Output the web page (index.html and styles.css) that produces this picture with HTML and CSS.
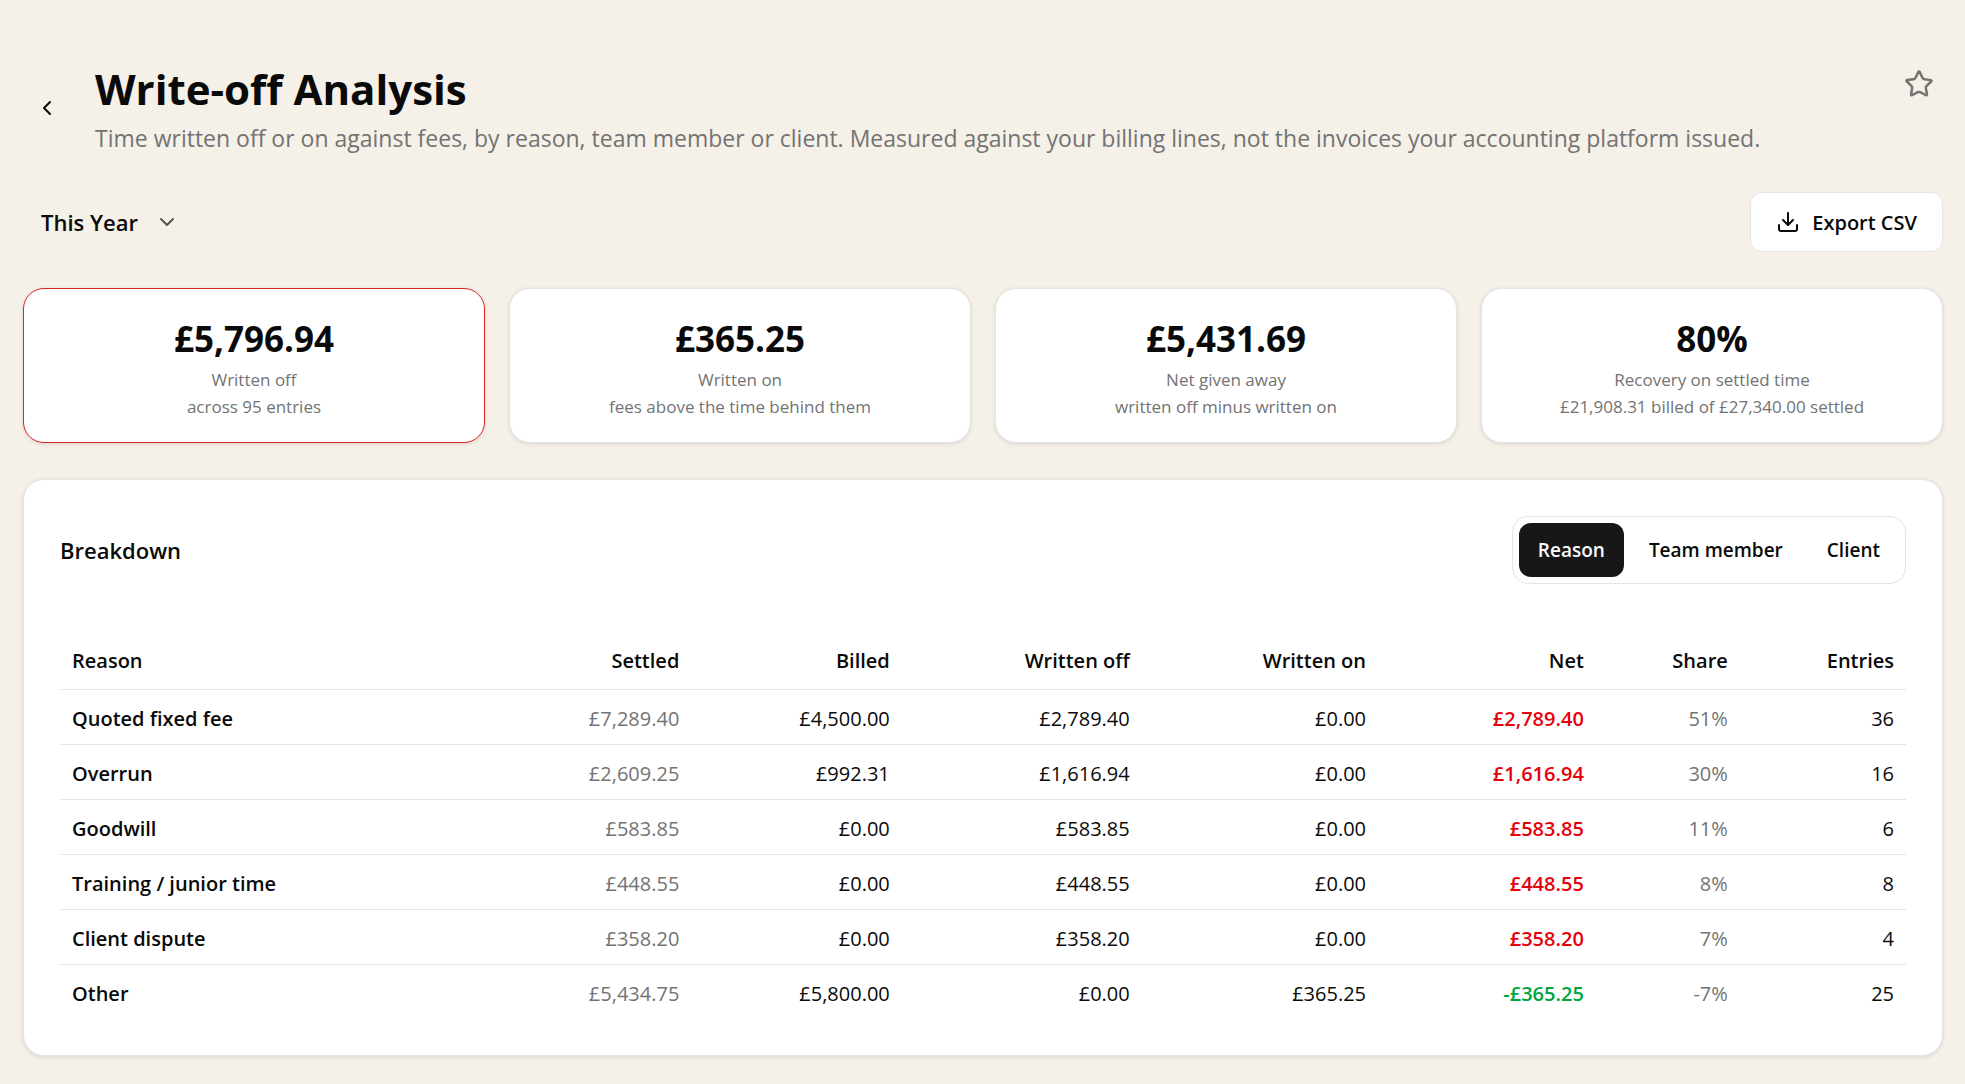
FILE: index.html
```
<!DOCTYPE html>
<html lang="en">
<head>
    <meta charset="UTF-8">
    <meta name="viewport" content="width=device-width, initial-scale=1.0">
    <title>Write-off Analysis</title>
    <link rel="stylesheet" href="styles.css">
</head>
<body>
    <main class="page">
        <header class="page-header">
            <button type="button" class="icon-button" aria-label="Back">
                <svg class="icon" viewBox="0 0 24 24"><path d="m15 18-6-6 6-6"/></svg>
            </button>
            <div class="page-heading">
                <h1>Write-off Analysis</h1>
                <p>Time written off or on against fees, by reason, team member or client. Measured against your billing lines, not the invoices your accounting platform issued.</p>
            </div>
            <button type="button" class="icon-button favourite" aria-label="Add to favourites">
                <svg class="icon icon-star" viewBox="0 0 24 24"><path d="M11.525 2.295a.53.53 0 0 1 .95 0l2.31 4.679a2.123 2.123 0 0 0 1.595 1.16l5.166.756a.53.53 0 0 1 .294.904l-3.736 3.638a2.123 2.123 0 0 0-.611 1.878l.882 5.14a.53.53 0 0 1-.771.56l-4.618-2.428a2.122 2.122 0 0 0-1.973 0L6.396 21.01a.53.53 0 0 1-.77-.56l.881-5.139a2.122 2.122 0 0 0-.611-1.879L2.16 9.795a.53.53 0 0 1 .294-.906l5.165-.755a2.122 2.122 0 0 0 1.597-1.16z"/></svg>
            </button>
        </header>

        <div class="toolbar">
            <div class="period">
                <select id="period" name="period" aria-label="Period">
                    <option>This Year</option>
                    <option>Last Year</option>
                </select>
                <svg class="icon period-arrow" viewBox="0 0 24 24"><path d="m6 9 6 6 6-6"/></svg>
            </div>
            <button type="button" class="export-button">
                <svg class="icon" viewBox="0 0 24 24"><path d="M12 15V3"/><path d="M21 15v4a2 2 0 0 1-2 2H5a2 2 0 0 1-2-2v-4"/><path d="m7 10 5 5 5-5"/></svg>
                Export CSV
            </button>
        </div>

        <section class="stats">
            <div class="card stat stat-alert">
                <div class="stat-value">£5,796.94</div>
                <div class="stat-label">Written off</div>
                <div class="stat-label">across 95 entries</div>
            </div>
            <div class="card stat">
                <div class="stat-value">£365.25</div>
                <div class="stat-label">Written on</div>
                <div class="stat-label">fees above the time behind them</div>
            </div>
            <div class="card stat">
                <div class="stat-value">£5,431.69</div>
                <div class="stat-label">Net given away</div>
                <div class="stat-label">written off minus written on</div>
            </div>
            <div class="card stat">
                <div class="stat-value">80%</div>
                <div class="stat-label">Recovery on settled time</div>
                <div class="stat-label">£21,908.31 billed of £27,340.00 settled</div>
            </div>
        </section>

        <section class="card breakdown">
            <div class="breakdown-header">
                <h2>Breakdown</h2>
                <div class="segmented">
                    <button type="button" class="segment active" aria-pressed="true">Reason</button>
                    <button type="button" class="segment" aria-pressed="false">Team member</button>
                    <button type="button" class="segment" aria-pressed="false">Client</button>
                </div>
            </div>
            <table class="breakdown-table">
                <colgroup>
                    <col class="col-reason">
                    <col class="col-settled">
                    <col class="col-billed">
                    <col class="col-off">
                    <col class="col-on">
                    <col class="col-net">
                    <col class="col-share">
                    <col class="col-entries">
                </colgroup>
                <thead>
                    <tr>
                        <th scope="col">Reason</th>
                        <th scope="col">Settled</th>
                        <th scope="col">Billed</th>
                        <th scope="col">Written off</th>
                        <th scope="col">Written on</th>
                        <th scope="col">Net</th>
                        <th scope="col">Share</th>
                        <th scope="col">Entries</th>
                    </tr>
                </thead>
                <tbody>
                    <tr>
                        <th scope="row">Quoted fixed fee</th>
                        <td class="muted">£7,289.40</td>
                        <td>£4,500.00</td>
                        <td>£2,789.40</td>
                        <td>£0.00</td>
                        <td class="loss">£2,789.40</td>
                        <td class="muted">51%</td>
                        <td>36</td>
                    </tr>
                    <tr>
                        <th scope="row">Overrun</th>
                        <td class="muted">£2,609.25</td>
                        <td>£992.31</td>
                        <td>£1,616.94</td>
                        <td>£0.00</td>
                        <td class="loss">£1,616.94</td>
                        <td class="muted">30%</td>
                        <td>16</td>
                    </tr>
                    <tr>
                        <th scope="row">Goodwill</th>
                        <td class="muted">£583.85</td>
                        <td>£0.00</td>
                        <td>£583.85</td>
                        <td>£0.00</td>
                        <td class="loss">£583.85</td>
                        <td class="muted">11%</td>
                        <td>6</td>
                    </tr>
                    <tr>
                        <th scope="row">Training / junior time</th>
                        <td class="muted">£448.55</td>
                        <td>£0.00</td>
                        <td>£448.55</td>
                        <td>£0.00</td>
                        <td class="loss">£448.55</td>
                        <td class="muted">8%</td>
                        <td>8</td>
                    </tr>
                    <tr>
                        <th scope="row">Client dispute</th>
                        <td class="muted">£358.20</td>
                        <td>£0.00</td>
                        <td>£358.20</td>
                        <td>£0.00</td>
                        <td class="loss">£358.20</td>
                        <td class="muted">7%</td>
                        <td>4</td>
                    </tr>
                    <tr>
                        <th scope="row">Other</th>
                        <td class="muted">£5,434.75</td>
                        <td>£5,800.00</td>
                        <td>£0.00</td>
                        <td>£365.25</td>
                        <td class="gain">-£365.25</td>
                        <td class="muted">-7%</td>
                        <td>25</td>
                    </tr>
                </tbody>
            </table>
        </section>
    </main>
</body>
</html>
```
FILE: styles.css
```
* {
    box-sizing: border-box;
}
body {
    margin: 0;
    background-color: #f5f0e8;
    color: #0a0a0a;
    font-family: "Segoe UI", "Open Sans", "Noto Sans", sans-serif;
    font-size: 20px;
}
h1, h2, p {
    margin: 0;
}
button, select {
    font: inherit;
    color: inherit;
    cursor: pointer;
}
.page {
    display: flex;
    flex-direction: column;
    gap: 36px;
    padding: 62px 22px 28px 23px;
}
.icon {
    width: 24px;
    height: 24px;
    flex: none;
    fill: none;
    stroke: currentColor;
    stroke-width: 2;
    stroke-linecap: round;
    stroke-linejoin: round;
}
.icon-star {
    width: 30px;
    height: 30px;
}

/* header */
.page-header {
    display: flex;
    align-items: center;
    gap: 24px;
    padding-bottom: 2px;
}
.page-heading {
    flex: 1;
}
.page-heading h1 {
    font-size: 42px;
    font-weight: 700;
    line-height: 54px;
}
.page-heading p {
    margin-top: 6px;
    color: #737373;
    font-size: 23px;
    line-height: 32px;
}
.icon-button {
    display: flex;
    align-items: center;
    justify-content: center;
    width: 48px;
    height: 44px;
    padding: 0;
    border: none;
    background: none;
}
.favourite {
    align-self: flex-start;
    color: #737373;
}

/* toolbar */
.toolbar {
    display: flex;
    align-items: center;
    justify-content: space-between;
}
.period {
    display: grid;
    align-items: center;
}
.period select, .period-arrow {
    grid-area: 1 / 1;
}
.period select {
    appearance: none;
    height: 60px;
    padding: 0 58px 0 18px;
    border: none;
    background: none;
    font-size: 22px;
    font-weight: 600;
}
.period-arrow {
    justify-self: end;
    margin-right: 18px;
    color: #555;
    pointer-events: none;
}
.export-button {
    display: flex;
    align-items: center;
    gap: 12px;
    height: 60px;
    padding: 0 25px;
    border: 1px solid #e5e5e5;
    border-radius: 12px;
    background-color: #fff;
    font-weight: 600;
}

/* cards */
.card {
    border: 1px solid #e5e5e5;
    border-radius: 21px;
    background-color: #fff;
    box-shadow: 0 1px 4px rgba(0, 0, 0, 0.12);
}
.stats {
    display: grid;
    grid-template-columns: repeat(4, 1fr);
    gap: 24px;
}
.stat {
    padding: 22px;
    text-align: center;
}
.stat-alert {
    border-color: #dc2626;
}
.stat-value {
    font-size: 35px;
    font-weight: 700;
    line-height: 55px;
}
.stat-label {
    color: #737373;
    font-size: 17px;
    line-height: 27px;
}

/* breakdown */
.breakdown {
    padding: 36px;
}
.breakdown-header {
    display: flex;
    align-items: center;
    justify-content: space-between;
    margin-bottom: 48px;
}
.breakdown-header h2 {
    font-size: 22px;
    font-weight: 600;
}
.segmented {
    display: flex;
    gap: 6px;
    padding: 6px;
    border: 1px solid #e5e5e5;
    border-radius: 16px;
}
.segment {
    height: 54px;
    padding: 0 19px;
    border: none;
    border-radius: 12px;
    background: none;
    font-size: 19px;
    font-weight: 600;
}
.segment.active {
    background-color: #171717;
    color: #fafafa;
}
.breakdown-table {
    width: 100%;
    table-layout: fixed;
    border-collapse: collapse;
}
.breakdown-table th, .breakdown-table td {
    height: 55px;
    padding: 3px 12px 0;
    text-align: right;
}
.breakdown-table th {
    font-weight: 600;
}
.breakdown-table th:first-child {
    text-align: left;
}
.breakdown-table thead th {
    height: 57px;
    padding-top: 0;
}
.breakdown-table tr {
    border-bottom: 1px solid #e5e5e5;
}
.breakdown-table tbody tr:last-child {
    border-bottom: none;
}
.breakdown-table .muted {
    color: #737373;
}
.breakdown-table .loss {
    color: #e7000b;
    font-weight: 600;
}
.breakdown-table .gain {
    color: #00a63e;
    font-weight: 600;
}
.col-reason {
    width: 24%;
}
.col-settled {
    width: 10.2%;
}
.col-billed {
    width: 11.4%;
}
.col-off {
    width: 13%;
}
.col-on {
    width: 12.8%;
}
.col-net {
    width: 11.8%;
}
.col-share {
    width: 7.8%;
}
.col-entries {
    width: 9%;
}
```
